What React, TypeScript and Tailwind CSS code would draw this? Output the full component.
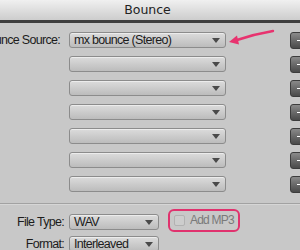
import React from 'react';

const font = { fontFamily: '"Liberation Sans", Arial, sans-serif' };

function Caret() {
  return (
    <svg width="8" height="5" viewBox="0 0 8 5" className="absolute right-[5px] top-[5px]">
      <path d="M0 0 H8 L4 5 Z" fill="#4a4a4a" />
    </svg>
  );
}

function Select({ value, width }: { value?: string; width: string }) {
  return (
    <div
      className={`relative h-[16px] shrink-0 ${width} rounded-[3px] border border-[#8c8c8c] bg-gradient-to-b from-[#dcdcdc] to-[#bcbcbc] shadow-[inset_0_1px_0_#ececec]`}
    >
      {value && (
        <span className="absolute left-[4px] top-[0px] text-[12.5px] leading-[15px] tracking-[-0.7px] text-[#1c1c1c] whitespace-nowrap">
          {value}
        </span>
      )}
      <Caret />
    </div>
  );
}

function MinusButton() {
  return (
    <div className="relative h-[17px] w-[20px] shrink-0 rounded-[3px] border border-[#3c3c3c] bg-gradient-to-b from-[#8a8a8a] to-[#4a4a4a]">
      <div className="absolute left-[6px] top-[7px] h-[1px] w-[6px] bg-white" />
    </div>
  );
}

const rows = ['mx bounce (Stereo)', '', '', '', '', '', ''];

export default function App() {
  return (
    <div className="relative h-[250px] w-[300px] overflow-hidden bg-[#c8c8c8]" style={font}>
      <div className="flex h-[23px] justify-center border-b-[3px] border-[#3e3e3e] bg-gradient-to-b from-[#f0f0f0] to-[#cdcdcd] pr-[5px]">
        <span className="text-[12.5px] leading-[19px] text-[#222]" style={{ fontFamily: '"DejaVu Sans", sans-serif' }}>
          Bounce
        </span>
      </div>

      <div className="flex flex-col pt-[5px]">
        {rows.map((v, i) => (
          <div key={i} className="flex h-[24px] items-center">
            <div className="flex w-[60px] shrink-0 justify-end whitespace-nowrap text-[12.5px] tracking-[-0.7px] text-[#1c1c1c]">
              {i === 0 ? 'Bounce Source:' : ''}
            </div>
            <div className="ml-[9px] shrink-0">
              <Select value={v} width="w-[157px]" />
            </div>
            <div className="ml-[64px] shrink-0">
              <MinusButton />
            </div>
          </div>
        ))}
      </div>

      <div className="mt-[7px] border-t border-[#a2a2a2] border-b border-b-[#d6d6d6]" />

      <div className="flex flex-col pt-[6px]">
        <div className="flex h-[22px] items-center">
          <div className="flex w-[64px] shrink-0 justify-end whitespace-nowrap text-[12.5px] tracking-[-0.7px] text-[#1c1c1c]">File Type:</div>
          <div className="ml-[5px] shrink-0">
            <Select value="WAV" width="w-[90px]" />
          </div>
          <div className="ml-[9px] flex h-[23px] w-[72px] shrink-0 -translate-y-[2px] items-center rounded-[6px] border-2 border-[#e0326e] pl-[4px]">
            <div className="h-[11px] w-[11px] shrink-0 rounded-[2px] border border-[#b2b2b2] bg-[#cdcdcd]" />
            <span className="ml-[5px] whitespace-nowrap text-[12px] tracking-[-0.8px] text-[#7a7a7a]">Add MP3</span>
          </div>
        </div>
        <div className="flex h-[22px] items-center">
          <div className="flex w-[64px] shrink-0 justify-end whitespace-nowrap text-[12.5px] tracking-[-0.7px] text-[#1c1c1c]">Format:</div>
          <div className="ml-[5px] shrink-0">
            <Select value="Interleaved" width="w-[90px]" />
          </div>
        </div>
      </div>

      <svg className="pointer-events-none absolute left-0 top-0" width="300" height="250">
        <path d="M273 31 Q255 34 237 40" stroke="#e8336f" strokeWidth="2.4" fill="none" strokeLinecap="round" />
        <path d="M229 42 L237 35.5 L239 44.5 Z" fill="#e8336f" />
      </svg>
    </div>
  );
}
